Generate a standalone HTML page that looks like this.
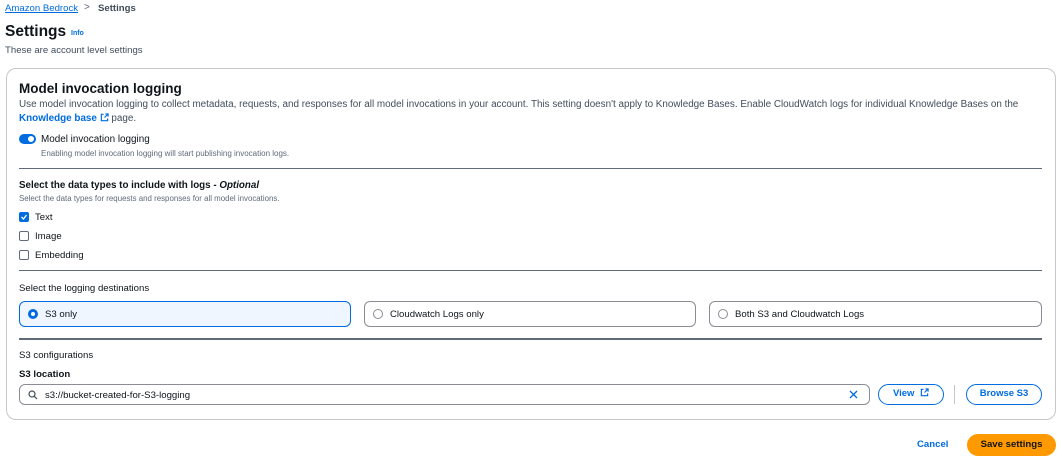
<!DOCTYPE html>
<html><head><style>
*{margin:0;padding:0;box-sizing:border-box}
body{width:1062px;height:462px;background:#fff;font-family:"Liberation Sans",sans-serif;color:#0f141a;position:relative;overflow:hidden;font-size:9.6px}
.a{position:absolute;white-space:nowrap}
.link{color:#006ce0}
.hr{position:absolute;left:19px;width:1023px;height:1px;background:#5f6b7a}
.cb{position:absolute;left:19px;width:10px;height:10px;border:1px solid #5f6b7a;border-radius:2px}
.tile{position:absolute;top:301px;height:26px;border:1px solid #8c8c94;border-radius:6px}
.rad{position:absolute;left:8px;top:7px;width:10px;height:10px;border:1px solid #8c8c94;border-radius:50%}
.btn{position:absolute;top:384px;height:21px;border:1.5px solid #006ce0;border-radius:11px;color:#006ce0;font-weight:bold;font-size:9.5px;text-align:center;line-height:18px}
</style></head><body>
<div class="a link" style="left:5px;top:3px;text-decoration:underline">Amazon Bedrock</div>
<div class="a" style="left:84px;top:2px;color:#5f6b7a;font-size:10px">&gt;</div>
<div class="a" style="left:98px;top:3px;color:#414d5c;font-weight:bold">Settings</div>
<div class="a" style="left:5px;top:23px;font-size:15.5px;font-weight:bold">Settings</div>
<div class="a link" style="left:71px;top:30px;font-size:7px;font-weight:bold">Info</div>
<div class="a" style="left:5px;top:45px;color:#414d5c">These are account level settings</div>
<div class="a" style="left:6px;top:68px;width:1050px;height:352px;border:1px solid #c6c6cd;border-radius:10px"></div>
<div class="a" style="left:19px;top:81px;font-size:13.5px;font-weight:bold">Model invocation logging</div>
<div class="a" style="left:19px;top:99px;color:#414d5c;font-size:9.9px">Use model invocation logging to collect metadata, requests, and responses for all model invocations in your account. This setting doesn't apply to Knowledge Bases. Enable CloudWatch logs for individual Knowledge Bases on the</div>
<div class="a" style="left:19px;top:113px;color:#414d5c;font-size:9.9px"><span class="link" style="font-weight:bold">Knowledge base</span> <svg width="9" height="9" viewBox="0 0 10 10" style="vertical-align:-1px"><path d="M6 1h3v3M9 1L5 5M4 1.5H1.5v7h7V6" fill="none" stroke="#006ce0" stroke-width="1.3"/></svg> page.</div>
<div class="a" style="left:19px;top:134px;width:17px;height:10px;border-radius:5px;background:#006ce0"><div style="position:absolute;right:2px;top:2px;width:6px;height:6px;border-radius:50%;background:#fff"></div></div>
<div class="a" style="left:41px;top:134px;font-size:9.9px">Model invocation logging</div>
<div class="a" style="left:41px;top:149px;font-size:8px;color:#5f6b7a">Enabling model invocation logging will start publishing invocation logs.</div>
<div class="hr" style="top:168px"></div>
<div class="a" style="left:19px;top:180px;font-weight:bold;font-size:9.8px">Select the data types to include with logs - <i>Optional</i></div>
<div class="a" style="left:19px;top:194px;font-size:7.9px;color:#5f6b7a">Select the data types for requests and responses for all model invocations.</div>
<div class="cb" style="top:212px;background:#006ce0;border-color:#006ce0"><svg width="8" height="8" viewBox="0 0 8 8" style="position:absolute;left:0;top:0"><path d="M1.5 4l2 2 3-4" fill="none" stroke="#fff" stroke-width="1.3"/></svg></div>
<div class="a" style="left:35px;top:212px">Text</div>
<div class="cb" style="top:231px"></div><div class="a" style="left:35px;top:231px">Image</div>
<div class="cb" style="top:250px"></div><div class="a" style="left:35px;top:250px">Embedding</div>
<div class="hr" style="top:270px"></div>
<div class="a" style="left:19px;top:283px">Select the logging destinations</div>
<div class="tile" style="left:19px;width:332px;border:1.5px solid #006ce0;background:#f0f6ff"><div class="rad" style="border:3px solid #006ce0;background:#fff;top:7px"></div><div class="a" style="left:25px;top:7px">S3 only</div></div>
<div class="tile" style="left:364px;width:332px"><div class="rad"></div><div class="a" style="left:25px;top:7px">Cloudwatch Logs only</div></div>
<div class="tile" style="left:709px;width:333px"><div class="rad"></div><div class="a" style="left:25px;top:7px">Both S3 and Cloudwatch Logs</div></div>
<div class="hr" style="top:338px;height:1.5px"></div>
<div class="a" style="left:19px;top:350px">S3 configurations</div>
<div class="a" style="left:19px;top:369px;font-weight:bold">S3 location</div>
<div class="a" style="left:19px;top:384px;width:851px;height:21px;border:1px solid #8c8c94;border-radius:6px">
<svg width="10" height="10" viewBox="0 0 10 10" style="position:absolute;left:8px;top:5px"><circle cx="4" cy="4" r="3" fill="none" stroke="#414d5c" stroke-width="1.2"/><path d="M6.2 6.2L9 9" stroke="#414d5c" stroke-width="1.2"/></svg>
<div class="a" style="left:25px;top:5px">s3://bucket-created-for-S3-logging</div>
<svg width="9" height="9" viewBox="0 0 9 9" style="position:absolute;right:11px;top:5px"><path d="M1 1l7 7M8 1L1 8" stroke="#006ce0" stroke-width="1.3"/></svg>
</div>
<div class="btn" style="left:878px;width:66px">View <svg width="9" height="9" viewBox="0 0 10 10" style="vertical-align:-1px;margin-left:3px"><path d="M6 1h3v3M9 1L5 5M4 1.5H1.5v7h7V6" fill="none" stroke="#006ce0" stroke-width="1.3"/></svg></div>
<div class="a" style="left:954px;top:385px;width:1px;height:19px;background:#c6c6cd"></div>
<div class="btn" style="left:966px;width:76px">Browse S3</div>
<div class="a link" style="left:917px;top:439px;font-weight:bold">Cancel</div>
<div class="a" style="left:967px;top:434px;width:89px;height:22px;border-radius:11px;background:#ff9900;font-weight:bold;text-align:center;line-height:22px">Save settings</div>
</body></html>
